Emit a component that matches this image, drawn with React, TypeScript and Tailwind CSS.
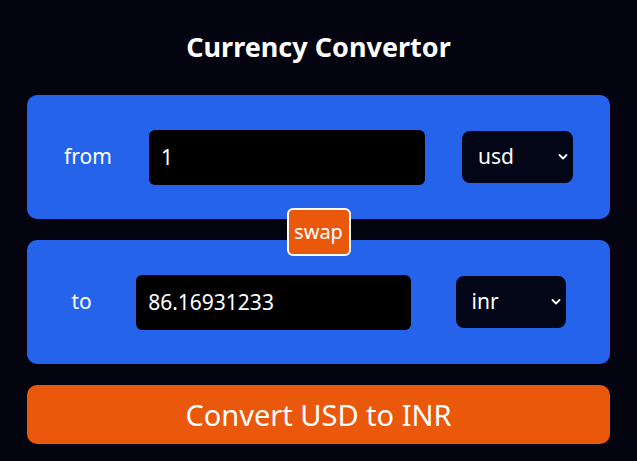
import { useState } from "react";

function Chevron() {
  return (
    <svg width="10" height="7" viewBox="0 0 10 7" className="pointer-events-none absolute right-[5px] top-1/2 -translate-y-1/2">
      <path d="M1.5 1.5 L5 5 L8.5 1.5" fill="none" stroke="white" strokeWidth="1.8" strokeLinecap="round" strokeLinejoin="round" />
    </svg>
  );
}

export default function App() {
  const [amount, setAmount] = useState("1");
  const [from, setFrom] = useState("usd");
  const [to, setTo] = useState("inr");
  const rate = 86.16931233;
  const converted = String(Number(amount) * rate);

  return (
    <div
      className="min-h-[461px] bg-[#03040f] px-[27px] pt-[30px] text-white"
      style={{ fontFamily: '"Noto Sans", "Open Sans", sans-serif' }}
    >
      <h1 className="mb-[31px] text-center text-[27px] font-bold leading-[34px]">Currency Convertor</h1>

      <div className="relative flex flex-col gap-[21px]">
        <div className="flex h-[124px] items-center justify-evenly rounded-[10px] bg-[#2563eb]">
          <span className="text-[21px]">from</span>
          <input
            value={amount}
            onChange={(e) => setAmount(e.target.value)}
            className="h-[55px] w-[276px] rounded-md bg-black px-3 text-[21px] text-white outline-none"
          />
          <div className="relative">
            <select
              value={from}
              onChange={(e) => setFrom(e.target.value)}
              className="h-[52px] w-[111px] appearance-none rounded-lg bg-[#030616] pl-4 text-[21px] text-white outline-none"
            >
              <option value="usd">usd</option>
              <option value="inr">inr</option>
            </select>
            <Chevron />
          </div>
        </div>

        <button
          type="button"
          onClick={() => {
            setFrom(to);
            setTo(from);
          }}
          className="absolute left-1/2 top-[113px] z-10 h-[48px] w-[64px] -translate-x-1/2 rounded-md border-2 border-white bg-[#ea580c] text-[20px] text-white"
        >
          swap
        </button>

        <div className="flex h-[124px] items-center justify-evenly rounded-[10px] bg-[#2563eb]">
          <span className="text-[21px]">to</span>
          <input
            value={converted}
            readOnly
            className="h-[55px] w-[275px] rounded-md bg-black px-3 text-[21px] text-white outline-none"
          />
          <div className="relative">
            <select
              value={to}
              onChange={(e) => setTo(e.target.value)}
              className="h-[52px] w-[110px] appearance-none rounded-lg bg-[#030616] pl-4 text-[21px] text-white outline-none"
            >
              <option value="inr">inr</option>
              <option value="usd">usd</option>
            </select>
            <Chevron />
          </div>
        </div>
      </div>

      <button
        type="button"
        className="mt-[21px] h-[59px] w-full rounded-[10px] bg-[#ea580c] text-[29px] text-white"
      >
        Convert {from.toUpperCase()} to {to.toUpperCase()}
      </button>
    </div>
  );
}
